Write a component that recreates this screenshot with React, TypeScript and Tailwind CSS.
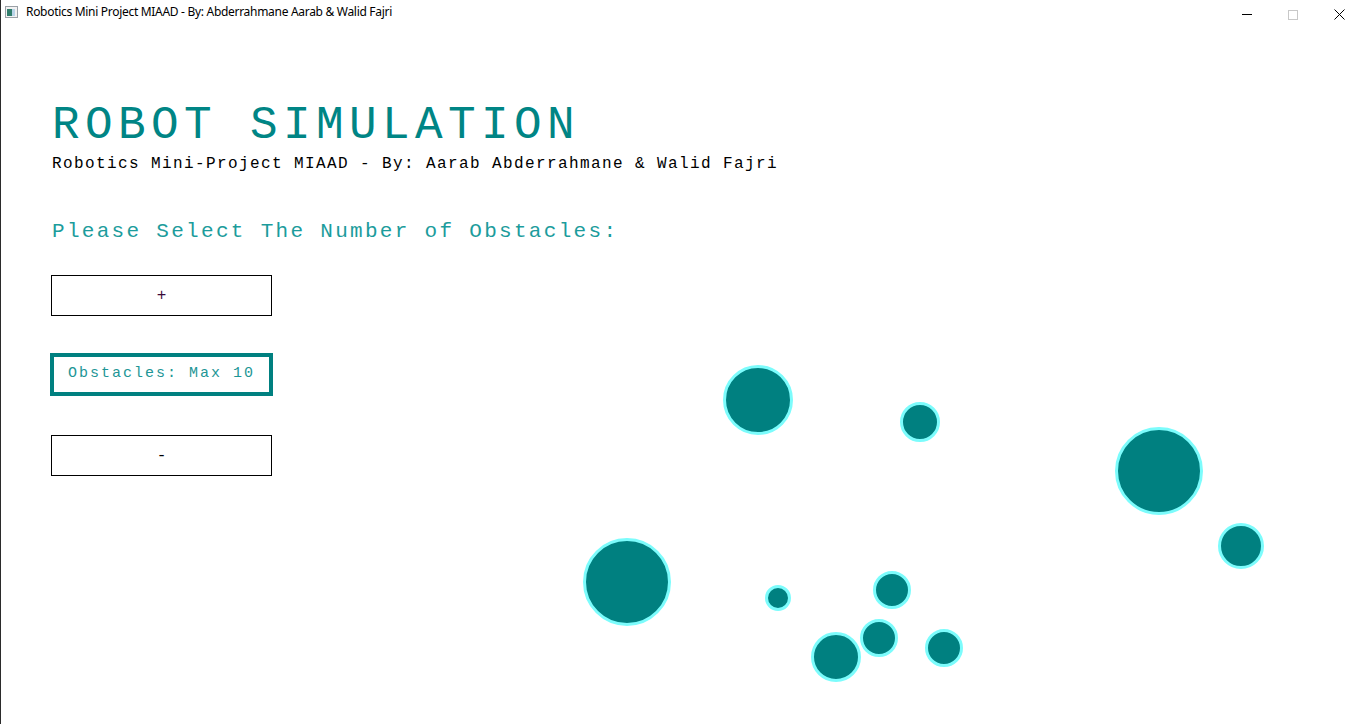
import React from "react";

const obstacles = [
  { x: 758, y: 400, r: 35 },
  { x: 920, y: 422, r: 20 },
  { x: 1159, y: 471, r: 44 },
  { x: 1241, y: 546, r: 23 },
  { x: 627, y: 582, r: 44 },
  { x: 778, y: 598, r: 13 },
  { x: 892, y: 590, r: 19 },
  { x: 836, y: 657, r: 25 },
  { x: 879, y: 638, r: 19 },
  { x: 944, y: 648, r: 19 },
];

const mono = "font-['Liberation_Mono','Courier_New',monospace]";

const App: React.FC = () => {
  return (
    <div className="w-[1358px] h-[724px] bg-white overflow-hidden relative border-l border-[#2b2b2b]">
      {/* title bar */}
      <div className="h-[31px] flex items-start">
        <div className="flex items-center gap-[8px] pl-[4px] pt-[5px]">
          <svg width="13" height="12" viewBox="0 0 13 12">
            <rect x="0.5" y="0.5" width="12" height="11" fill="#f2f2f2" stroke="#9aa0a6" />
            <rect x="2" y="3" width="5" height="7" fill="#2f7d6b" />
            <rect x="7" y="3" width="3" height="7" fill="#b9d4e8" />
          </svg>
          <span className="font-['Noto_Sans','Liberation_Sans',sans-serif] text-[12px] leading-[14px] tracking-[-0.3px] text-black">
            Robotics Mini Project MIAAD - By: Abderrahmane Aarab &amp; Walid Fajri
          </span>
        </div>
        <div className="ml-auto mr-[-4px] flex h-[29px]">
          <div className="w-[46px] flex items-center justify-center">
            <div className="w-[10px] h-px bg-black" />
          </div>
          <div className="w-[46px] flex items-center justify-center">
            <div className="w-[10px] h-[10px] border border-[#c8c8c8]" />
          </div>
          <div className="w-[46px] flex items-center justify-center">
            <svg width="11" height="11" viewBox="0 0 11 11">
              <path d="M0.5 0.5 L10.5 10.5 M10.5 0.5 L0.5 10.5" stroke="#000" strokeWidth="1" />
            </svg>
          </div>
        </div>
      </div>

      {/* content */}
      <div className="pl-[50px] pt-[69px] flex flex-col items-start">
        <h1 className={`${mono} text-[46px] leading-[52px] text-[#008585] tracking-[5.4px] ml-[1px]`}>ROBOT SIMULATION</h1>
        <p className={`${mono} text-[16px] leading-[18px] text-black mt-[3px] tracking-[1.4px] ml-[1px]`}>
          Robotics Mini-Project MIAAD - By: Aarab Abderrahmane &amp; Walid Fajri
        </p>
        <p className={`${mono} text-[21px] leading-[24px] text-[#1c9c9c] mt-[47px] tracking-[2.3px] ml-[1px]`}>
          Please Select The Number of Obstacles:
        </p>

        <div className="mt-[31px] flex flex-col">
          <button className={`w-[221px] h-[41px] border border-black flex items-center justify-center ${mono} text-[16px] text-[#3a0a3a]`}>
            +
          </button>
          <div className={`w-[223px] h-[43px] mt-[37px] -ml-[1px] border-[4px] border-[#008080] flex items-center justify-center ${mono} text-[15px] tracking-[2px] text-[#1e9696]`}>
            Obstacles: Max 10
          </div>
          <button className={`w-[221px] h-[41px] mt-[39px] border border-black flex items-center justify-center ${mono} text-[16px] text-black`}>
            -
          </button>
        </div>
      </div>

      {/* obstacles */}
      {obstacles.map((o, i) => (
        <div
          key={i}
          className="absolute rounded-full bg-[#008080] border-[3px] border-[#7cfcfc]"
          style={{ left: o.x - o.r - 1, top: o.y - o.r, width: o.r * 2, height: o.r * 2 }}
        />
      ))}
    </div>
  );
};

export default App;
